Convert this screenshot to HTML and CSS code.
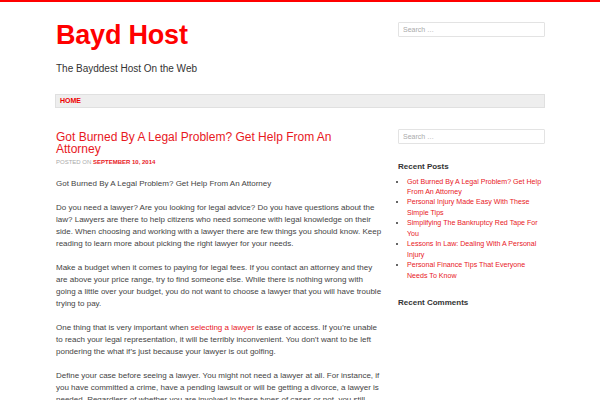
FILE: index.html
```html
<!DOCTYPE html>
<html>
<head>
<meta charset="utf-8">
<link rel="stylesheet" href="styles.css">
</head>
<body>
<div class="topbar"></div>
<div class="page">
  <header class="site-header">
    <div class="branding">
      <h1 class="site-title">Bayd Host</h1>
      <p class="site-desc">The Bayddest Host On the Web</p>
    </div>
    <div class="header-search">
      <input class="search-field" type="search" placeholder="Search …">
    </div>
  </header>
  <nav class="main-nav">
    <a class="nav-item" href="#">HOME</a>
  </nav>
  <div class="content-area">
    <main class="main">
      <article class="post">
        <h2 class="entry-title">Got Burned By A Legal Problem? Get Help From An Attorney</h2>
        <div class="entry-meta">POSTED ON <a href="#">SEPTEMBER 10, 2014</a></div>
        <div class="entry-content">
          <p>Got Burned By A Legal Problem? Get Help From An Attorney</p>
          <p>Do you need a lawyer? Are you looking for legal advice? Do you have questions about the law? Lawyers are there to help citizens who need someone with legal knowledge on their side. When choosing and working with a lawyer there are few things you should know. Keep reading to learn more about picking the right lawyer for your needs.</p>
          <p>Make a budget when it comes to paying for legal fees. If you contact an attorney and they are above your price range, try to find someone else. While there is nothing wrong with going a little over your budget, you do not want to choose a lawyer that you will have trouble trying to pay.</p>
          <p>One thing that is very important when <a href="#">selecting a lawyer</a> is ease of access. If you’re unable to reach your legal representation, it will be terribly inconvenient. You don’t want to be left pondering the what if’s just because your lawyer is out golfing.</p>
          <p>Define your case before seeing a lawyer. You might not need a lawyer at all. For instance, if you have committed a crime, have a pending lawsuit or will be getting a divorce, a lawyer is needed. Regardless of whether you are involved in these types of cases or not, you still need a lawyer.</p>
        </div>
      </article>
    </main>
    <aside class="sidebar">
      <div class="widget">
        <input class="search-field" type="search" placeholder="Search …">
      </div>
      <div class="widget widget-posts">
        <h3 class="widget-title">Recent Posts</h3>
        <ul class="widget-list">
          <li><a href="#">Got Burned By A Legal Problem? Get Help From An Attorney</a></li>
          <li><a href="#">Personal Injury Made Easy With These Simple Tips</a></li>
          <li><a href="#">Simplifying The Bankruptcy Red Tape For You</a></li>
          <li><a href="#">Lessons In Law: Dealing With A Personal Injury</a></li>
          <li><a href="#">Personal Finance Tips That Everyone Needs To Know</a></li>
        </ul>
      </div>
      <div class="widget">
        <h3 class="widget-title">Recent Comments</h3>
      </div>
    </aside>
  </div>
</div>
</body>
</html>
```
FILE: styles.css
```css
html, body {
  margin: 0;
  padding: 0;
  background: #fff;
  font-family: "Liberation Sans", Arial, sans-serif;
  color: #444;
  overflow: hidden;
}
.topbar {
  height: 2px;
  background: #f00;
}
.page {
  width: 490px;
  margin: 0 auto;
}
a {
  color: #e8181e;
  text-decoration: none;
}
.site-header {
  display: flex;
  justify-content: space-between;
  align-items: flex-start;
  padding-top: 19px;
}
.branding {
  padding-left: 1px;
}
.header-search {
  padding-top: 1px;
}
.site-title {
  margin: 0;
  font-size: 27px;
  line-height: 28px;
  font-weight: bold;
  color: #f00;
  letter-spacing: -0.2px;
}
.site-desc {
  margin: 14px 0 0;
  font-size: 10px;
  line-height: 12px;
  color: #333;
}
.search-field {
  display: block;
  box-sizing: border-box;
  width: 147px;
  height: 15px;
  margin: 0;
  padding: 0 4px;
  border: 1px solid #e3e3e3;
  border-radius: 1px;
  font-family: "Liberation Sans", Arial, sans-serif;
  font-size: 7px;
  color: #999;
  background: #fff;
  outline: none;
}
.search-field::placeholder {
  color: #aaa;
}
.main-nav {
  margin-top: 19px;
  height: 12px;
  border: 1px solid #e0e0e0;
  background: #eeeeee;
  display: flex;
  align-items: center;
  padding: 0 4px;
}
.nav-item {
  font-size: 7px;
  font-weight: bold;
  color: #e00;
  line-height: 12px;
}
.content-area {
  display: flex;
  justify-content: space-between;
  margin-top: 21px;
}
.main {
  width: 327px;
  padding-left: 1px;
  padding-top: 1.5px;
}
.entry-title {
  margin: 0;
  max-width: 300px;
  font-size: 12px;
  line-height: 12.5px;
  font-weight: normal;
  color: #e8181e;
}
.entry-meta {
  margin-top: 2px;
  font-size: 6px;
  line-height: 8px;
  color: #aaa;
}
.entry-meta a {
  font-weight: bold;
  color: #e8181e;
}
.entry-content {
  margin-top: 12.5px;
  font-size: 8px;
  line-height: 12px;
  color: #444;
}
.entry-content p {
  margin: 0 0 12px;
}
.sidebar {
  width: 147px;
}
.widget {
  margin-bottom: 18px;
}
.widget-posts {
  margin-bottom: 16.7px;
}
.widget-title {
  margin: 0 0 4.5px;
  font-size: 8px;
  line-height: 10px;
  font-weight: bold;
  color: #333;
}
.widget-list {
  margin: 0;
  padding: 0 0 0 9px;
  font-size: 7.1px;
  line-height: 10.45px;
}
.widget-list li {
  color: #333;
}
.widget-list a {
  color: #e8181e;
}
```
